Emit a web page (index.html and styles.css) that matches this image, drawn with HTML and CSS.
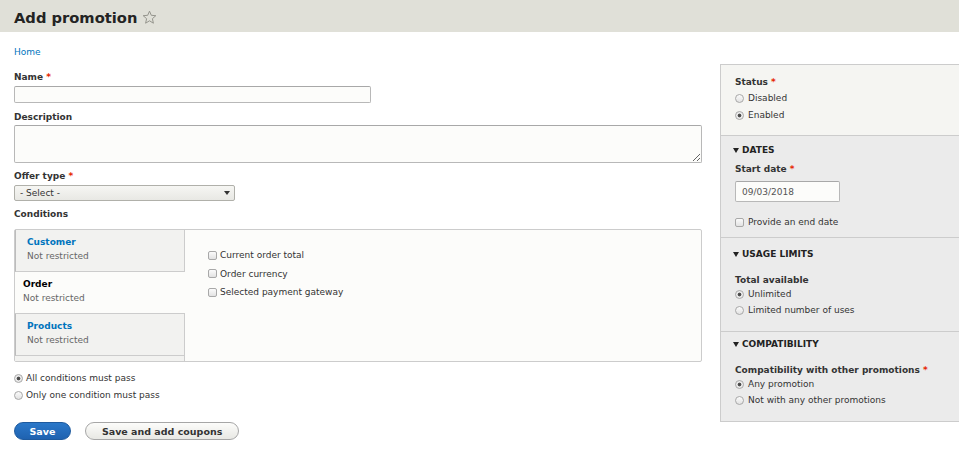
FILE: index.html
```html
<!DOCTYPE html>
<html lang="en">
<head>
  <meta charset="UTF-8">
  <title>Add promotion</title>
  <link rel="stylesheet" href="styles.css">
</head>
<body>
  <header class="page-header">
    <h1>Add promotion</h1>
    <svg class="star" width="15" height="15" viewBox="0 0 15 15">
      <path d="M7.5 1.2 L9.3 5.3 L13.8 5.7 L10.4 8.7 L11.4 13.2 L7.5 10.8 L3.6 13.2 L4.6 8.7 L1.2 5.7 L5.7 5.3 Z" fill="none" stroke="#8c8c84" stroke-width="0.9" stroke-linejoin="round"/>
    </svg>
  </header>

  <div class="page">
    <div class="breadcrumb"><a href="#">Home</a></div>

    <div class="layout">
      <form class="main">
        <label class="field-label label-name">Name <span class="req">*</span></label>
        <input type="text" class="text-input name-input">

        <label class="field-label label-desc">Description</label>
        <textarea class="text-area"></textarea>

        <label class="field-label label-offer">Offer type <span class="req">*</span></label>
        <div class="select-wrap">
          <select class="select">
            <option>- Select -</option>
          </select>
        </div>

        <label class="field-label label-cond">Conditions</label>
        <div class="vtabs">
          <ul class="vtabs-menu">
            <li class="vtab">
              <a href="#">Customer</a>
              <span class="summary">Not restricted</span>
            </li>
            <li class="vtab selected">
              <a href="#">Order</a>
              <span class="summary">Not restricted</span>
            </li>
            <li class="vtab">
              <a href="#">Products</a>
              <span class="summary">Not restricted</span>
            </li>
          </ul>
          <div class="vtabs-pane">
            <label class="opt"><input type="checkbox"> Current order total</label>
            <label class="opt"><input type="checkbox"> Order currency</label>
            <label class="opt"><input type="checkbox"> Selected payment gateway</label>
          </div>
        </div>

        <div class="radios">
          <label class="opt"><input type="radio" name="cond" checked> All conditions must pass</label>
          <label class="opt"><input type="radio" name="cond"> Only one condition must pass</label>
        </div>

        <div class="actions">
          <button type="button" class="button primary">Save</button>
          <button type="button" class="button">Save and add coupons</button>
        </div>
      </form>

      <aside class="sidebar">
        <div class="side-section status">
          <div class="field-label">Status <span class="req">*</span></div>
          <label class="opt"><input type="radio" name="status"> Disabled</label>
          <label class="opt"><input type="radio" name="status" checked> Enabled</label>
        </div>

        <div class="side-section details dates">
          <div class="details-title">DATES</div>
          <div class="field-label">Start date <span class="req">*</span></div>
          <input type="text" class="text-input date-input" value="09/03/2018">
          <label class="opt end-date"><input type="checkbox"> Provide an end date</label>
        </div>

        <div class="side-section details usage">
          <div class="details-title">USAGE LIMITS</div>
          <div class="field-label">Total available</div>
          <label class="opt"><input type="radio" name="usage" checked> Unlimited</label>
          <label class="opt"><input type="radio" name="usage"> Limited number of uses</label>
        </div>

        <div class="side-section details compat">
          <div class="details-title">COMPATIBILITY</div>
          <div class="field-label">Compatibility with other promotions <span class="req">*</span></div>
          <label class="opt"><input type="radio" name="compat" checked> Any promotion</label>
          <label class="opt"><input type="radio" name="compat"> Not with any other promotions</label>
        </div>
      </aside>
    </div>
  </div>
</body>
</html>
```

FILE: styles.css
```css
body {
  margin: 0;
  font-family: "DejaVu Sans", sans-serif;
  font-size: 9px;
  color: #333;
  background: #fff;
  overflow: hidden;
}

.page-header {
  height: 32px;
  background: #e0e0d8;
  display: flex;
  align-items: center;
  padding-left: 14px;
}

.page-header h1 {
  margin: 0;
  font-size: 14.7px;
  font-weight: bold;
  color: #232323;
  line-height: 18px;
  margin-top: 3px;
}

.star {
  margin-left: 5px;
  margin-top: 2px;
}

.page {
  padding: 0 0 0 14px;
}

.breadcrumb {
  margin-top: 14px;
  line-height: 12px;
  height: 12px;
}

.breadcrumb a {
  color: #0074bd;
  text-decoration: none;
}

.layout {
  display: flex;
  gap: 18px;
  margin-top: 6px;
}

.main {
  width: 688px;
  flex: none;
}

.field-label {
  display: block;
  font-weight: bold;
  color: #333;
  line-height: 12px;
}

.req {
  color: #e62600;
}

.label-name { margin-top: 7px; }
.label-desc { margin-top: 8px; }
.label-offer { margin-top: 7px; }
.label-cond { margin-top: 7px; }

.text-input {
  display: block;
  box-sizing: border-box;
  border: 1px solid #b8b8b8;
  border-top-color: #a8a8a8;
  border-radius: 2px;
  background: #fcfcfa;
  font-family: "DejaVu Sans", sans-serif;
  font-size: 9px;
  color: #555;
  padding: 0 6px;
  margin: 0;
}

.name-input {
  width: 357px;
  height: 17px;
  margin-top: 3px;
}

.text-area {
  display: block;
  box-sizing: border-box;
  width: 688px;
  height: 38px;
  margin: 2px 0 0;
  border: 1px solid #b8b8b8;
  border-top-color: #a8a8a8;
  border-radius: 2px;
  background: #fcfcfa;
  resize: vertical;
}

.select-wrap {
  position: relative;
  width: 221px;
  margin-top: 3px;
}

.select {
  display: block;
  box-sizing: border-box;
  width: 221px;
  height: 16px;
  -webkit-appearance: none;
  appearance: none;
  border: 1px solid #b0b0aa;
  border-radius: 2px;
  background: linear-gradient(#f6f6f3, #e8e8e4);
  font-family: "DejaVu Sans", sans-serif;
  font-size: 9px;
  color: #333;
  padding: 0 5px;
  margin: 0;
}

.select-wrap::after {
  content: "";
  position: absolute;
  right: 5px;
  top: 6px;
  border-left: 3.5px solid transparent;
  border-right: 3.5px solid transparent;
  border-top: 4px solid #333;
}

.vtabs {
  display: flex;
  margin-top: 9px;
  height: 133px;
  box-sizing: border-box;
  border: 1px solid #ccc;
  border-radius: 2px;
  background: #fcfcfa;
}

.vtabs-menu {
  list-style: none;
  margin: 0;
  padding: 0;
  width: 169px;
  flex: none;
  background: #f2f2f0;
  border-right: 1px solid #ccc;
}

.vtab {
  height: 42px;
  box-sizing: border-box;
  border-bottom: 1px solid #ccc;
  border-left: 1px solid #bcbcbc;
  padding: 6px 0 0 11px;
  line-height: 13.5px;
}

.vtab a {
  display: block;
  font-weight: bold;
  color: #0074bd;
  text-decoration: none;
}

.vtab .summary {
  display: block;
  color: #666;
}

.vtab.selected {
  background: #fcfcfa;
  border-left: none;
  margin-right: -1px;
  padding-left: 8px;
}

.vtab.selected a {
  color: #000;
}

.vtabs-pane {
  padding: 19px 0 0 23px;
}

.vtabs-pane .opt + .opt {
  margin-top: 6.5px;
}

.opt {
  display: flex;
  align-items: center;
  height: 12px;
  line-height: 12px;
  color: #333;
}

.opt input {
  -webkit-appearance: none;
  appearance: none;
  width: 9px;
  height: 9px;
  margin: 0 3px 0 0;
  box-sizing: border-box;
  border: 1px solid #a8a8a8;
  background: linear-gradient(#fbfbfb, #e2e2e2);
  flex: none;
}

.opt input[type="checkbox"] {
  border-radius: 2px;
}

.opt input[type="radio"] {
  border-radius: 50%;
}

.opt input[type="radio"]:checked {
  background: radial-gradient(circle, #444 0, #555 1.6px, #e8e8e8 2.2px, #f4f4f4 100%);
}

.radios {
  margin-top: 10px;
}

.radios .opt + .opt {
  margin-top: 5px;
}

.actions {
  margin-top: 21px;
  display: flex;
  gap: 14px;
}

.button {
  height: 18px;
  box-sizing: border-box;
  border-radius: 10px;
  border: 1px solid #a6a6a6;
  background: linear-gradient(#fcfcfa, #e8e8e4);
  font-family: "DejaVu Sans", sans-serif;
  font-size: 9.5px;
  font-weight: bold;
  color: #333;
  padding: 0 16px;
  margin: 0;
}

.button.primary {
  background: linear-gradient(#2b78c9, #1f62b0);
  border-color: #1e5a9e;
  color: #fff;
  padding: 0 14.5px;
}

.sidebar {
  flex: 1;
  height: 358px;
  box-sizing: border-box;
  border: 1px solid #ccc;
  border-right: none;
  background: #ebebeb;
}

.side-section {
  padding-left: 14px;
  box-sizing: border-box;
}

.side-section .opt input {
  margin-right: 4px;
}

.status {
  height: 71px;
  background: #f5f5f2;
  border-bottom: 1px solid #ccc;
  padding-top: 11px;
}

.status .field-label { margin-bottom: 4px; }
.status .opt + .opt { margin-top: 5px; }

.details-title {
  position: relative;
  font-weight: bold;
  color: #222;
  line-height: 12px;
  padding-left: 9px;
  margin-left: -2px;
}

.details-title::before {
  content: "";
  position: absolute;
  left: 0;
  top: 4px;
  border-left: 3px solid transparent;
  border-right: 3px solid transparent;
  border-top: 5px solid #222;
}

.details {
  border-bottom: 1px solid #ccc;
}

.dates {
  height: 102px;
  padding-top: 8px;
}

.dates .field-label { margin-top: 7px; }

.date-input {
  width: 105px;
  height: 21px;
  margin-top: 6px;
  padding: 0 6px;
  color: #555;
}

.end-date {
  margin-top: 14px;
}

.usage {
  height: 94px;
  padding-top: 10px;
}

.usage .field-label { margin-top: 14px; }
.usage .opt { margin-top: 2px; }
.usage .opt + .opt { margin-top: 4px; }

.compat {
  height: 90px;
  padding-top: 6px;
}

.compat .field-label { margin-top: 14px; }
.compat .opt { margin-top: 2px; }
.compat .opt + .opt { margin-top: 4px; }
```
